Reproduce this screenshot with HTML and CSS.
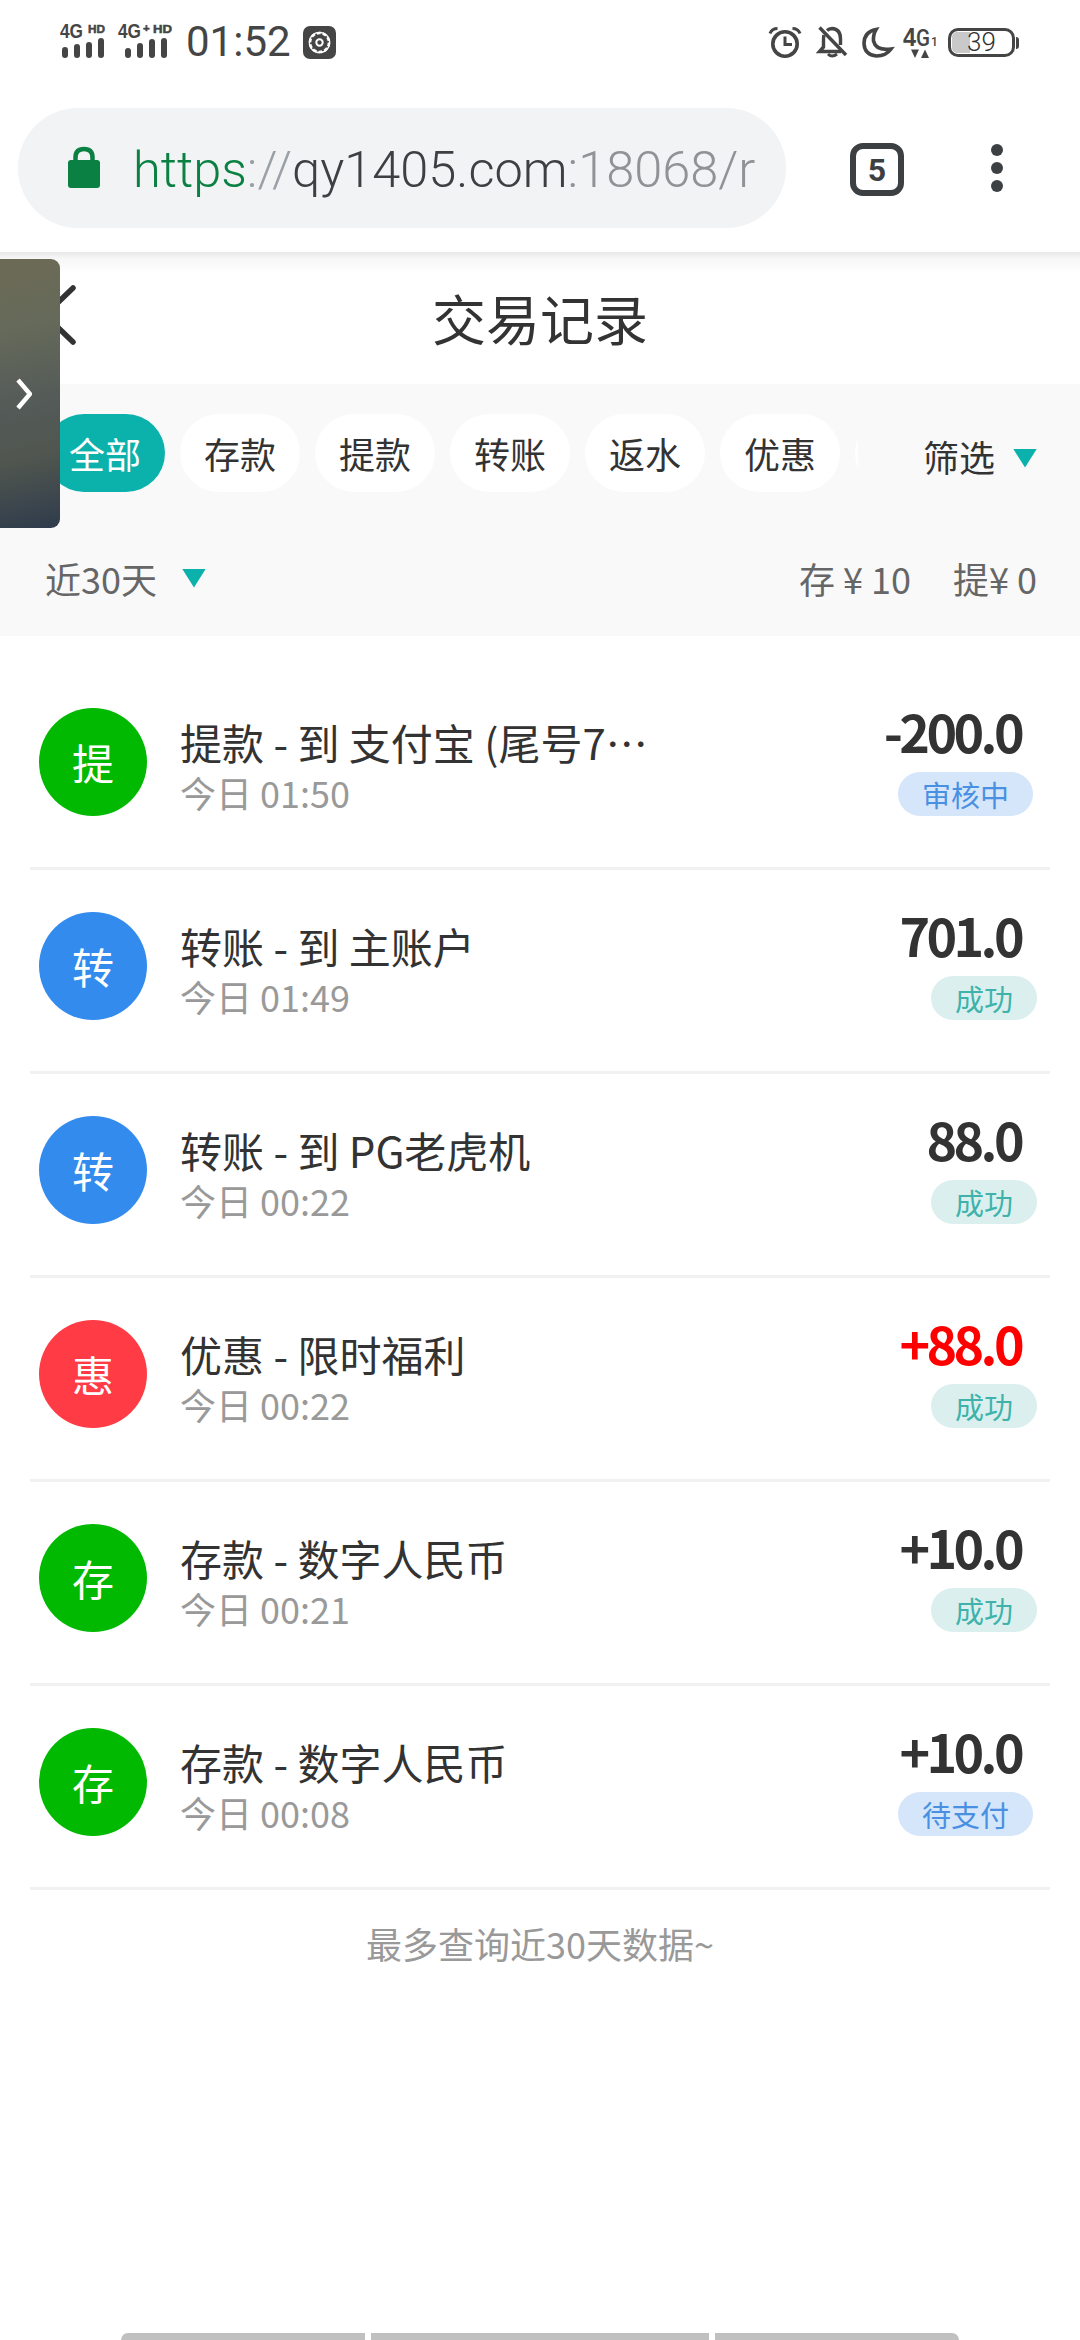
FILE: index.html
```html
<!DOCTYPE html>
<html lang="zh-CN">
<head>
<meta charset="utf-8">
<title>交易记录</title>
<link rel="stylesheet" href="styles.css">
</head>
<body>
<div class="status">
  <div class="status-group">
    <svg class="sig-a" viewBox="0 0 50 40">
      <text class="net" x="0" y="17" textLength="23" lengthAdjust="spacingAndGlyphs">4G</text><text class="hd" x="28" y="12" textLength="17" lengthAdjust="spacingAndGlyphs">HD</text>
      <rect x="2" y="26" width="6" height="11" rx="3"/><rect x="14" y="23" width="6" height="14" rx="3"/><rect x="26" y="21" width="6" height="16" rx="3"/><rect x="38" y="17" width="6" height="20" rx="3"/>
    </svg>
    <svg class="sig-b" viewBox="0 0 56 40">
      <text class="net" x="0" y="17" textLength="23" lengthAdjust="spacingAndGlyphs">4G</text><text class="hd" x="25" y="11">+</text><text class="hd" x="35" y="12" textLength="19" lengthAdjust="spacingAndGlyphs">HD</text>
      <rect x="7" y="27" width="6" height="10" rx="3"/><rect x="19" y="22" width="6" height="15" rx="3"/><rect x="31" y="18" width="6" height="19" rx="3"/><rect x="43" y="17" width="6" height="20" rx="3"/>
    </svg>
    <span class="clock">01:52</span>
    <svg class="gear" viewBox="0 0 33 33">
      <rect width="33" height="33" rx="7" fill="#454545"/>
      <circle cx="16.5" cy="16.5" r="9.5" fill="none" stroke="#fff" stroke-width="2.6" stroke-dasharray="4 1.96"/>
      <circle cx="16.5" cy="16.5" r="10.2" fill="none" stroke="#fff" stroke-width="1.2"/>
      <circle cx="16.5" cy="16.5" r="3.2" fill="none" stroke="#fff" stroke-width="2"/>
    </svg>
  </div>
  <div class="status-group status-right">
    <svg class="ico-alarm" viewBox="0 0 34 32" fill="none" stroke="#454545" stroke-width="3.6">
      <circle cx="17" cy="18" r="12.2"/>
      <path d="M17 10.5V18.5H24" stroke-width="3"/>
      <path d="M2 7.500Q4 2.500 9.500 2.500M32 7.500Q30 2.500 24.500 2.500" stroke-width="3"/>
    </svg>
    <svg class="ico-bell" viewBox="0 0 31 32" fill="none" stroke="#454545" stroke-width="3.4">
      <path d="M7 9Q6.500 11 6.500 14V21L2.500 25.500H24"/>
      <path d="M10 4.500Q12 2.500 15 2.500Q23.500 3 23.500 13V19"/>
      <path d="M11 28Q15 32 20 28" stroke-width="3"/>
      <path d="M2.500 1.500L29 29"/>
    </svg>
    <svg class="ico-moon" viewBox="0 0 31 31" fill="none" stroke="#454545" stroke-width="3.6">
      <path d="M14 2.500Q2 5 2 16.500Q2.500 28 14.500 29Q24 29 29 22Q14 24 11.500 14Q11 7.500 14 2.500Z"/>
    </svg>
    <svg class="ico-net" viewBox="0 0 34 32">
      <text class="net-small" x="0" y="20" textLength="13" lengthAdjust="spacingAndGlyphs">4</text><text class="net-g" x="13" y="20" textLength="14" lengthAdjust="spacingAndGlyphs">G</text><text class="net-sub" x="28" y="20">1</text>
      <path d="M8 23.500H16L12 32ZM22 23.500L26 32H18Z"/>
    </svg>
    <div class="battery">
      <span class="battery-fill"></span>
      <span class="battery-num">39</span>
    </div>
  </div>
</div>

<div class="toolbar">
  <div class="omnibox">
    <svg class="lock" viewBox="0 0 32 42">
      <rect y="14" width="32" height="28" rx="3" fill="#0b8043"/>
      <path d="M7.500 17V11.500Q7.500 3 16 3Q24.500 3 24.500 11.500V17" fill="none" stroke="#0b8043" stroke-width="4.500"/>
    </svg>
    <div class="url"><span class="u-scheme">https</span><span class="u-sep">://</span><span class="u-host">qy1405.com</span><span class="u-rest">:18068/r</span></div>
  </div>
  <div class="tab-count">5</div>
  <div class="menu-dots"><i></i><i></i><i></i></div>
</div>

<header class="page-head">
  <svg class="back" viewBox="0 0 36 60" fill="none" stroke="#333" stroke-width="5.500" stroke-linecap="round"><path d="M32 3L4 30L32 57"/></svg>
  <h1 class="page-title">交易记录</h1>
</header>

<section class="filters">
  <div class="tab-row">
    <div class="chips">
      <span class="chip chip-on">全部</span>
      <span class="chip">存款</span>
      <span class="chip">提款</span>
      <span class="chip">转账</span>
      <span class="chip">返水</span>
      <span class="chip">优惠</span>
      <span class="chip"></span>
    </div>
    <div class="filter-btn">筛选<span class="tri"></span></div>
  </div>
  <div class="range-row">
    <div class="range">近30天<span class="tri"></span></div>
    <div class="totals"><span>存 ¥ 10</span><span>提¥ 0</span></div>
  </div>
</section>

<main class="list">
  <article class="row">
    <div class="avatar av-green">提</div>
    <div class="info"><div class="info-title">提款 - 到 支付宝 (尾号7…</div><div class="info-time">今日 01:50</div></div>
    <div class="side"><div class="amount">-200.0</div><div class="badge badge-blue">审核中</div></div>
  </article>
  <article class="row">
    <div class="avatar av-blue">转</div>
    <div class="info"><div class="info-title">转账 - 到 主账户</div><div class="info-time">今日 01:49</div></div>
    <div class="side"><div class="amount">701.0</div><div class="badge badge-teal">成功</div></div>
  </article>
  <article class="row">
    <div class="avatar av-blue">转</div>
    <div class="info"><div class="info-title">转账 - 到 PG老虎机</div><div class="info-time">今日 00:22</div></div>
    <div class="side"><div class="amount">88.0</div><div class="badge badge-teal">成功</div></div>
  </article>
  <article class="row">
    <div class="avatar av-red">惠</div>
    <div class="info"><div class="info-title">优惠 - 限时福利</div><div class="info-time">今日 00:22</div></div>
    <div class="side"><div class="amount amount-red">+88.0</div><div class="badge badge-teal">成功</div></div>
  </article>
  <article class="row">
    <div class="avatar av-green">存</div>
    <div class="info"><div class="info-title">存款 - 数字人民币</div><div class="info-time">今日 00:21</div></div>
    <div class="side"><div class="amount">+10.0</div><div class="badge badge-teal">成功</div></div>
  </article>
  <article class="row">
    <div class="avatar av-green">存</div>
    <div class="info"><div class="info-title">存款 - 数字人民币</div><div class="info-time">今日 00:08</div></div>
    <div class="side"><div class="amount">+10.0</div><div class="badge badge-blue">待支付</div></div>
  </article>
</main>
<p class="list-end">最多查询近30天数据~</p>

<div class="nav-bar"><span></span><span></span><span></span></div>

<!-- floating side drawer handle -->
<div class="drawer">
  <svg class="drawer-arrow" viewBox="0 0 16 32" fill="none" stroke="#fff" stroke-width="4.500"><path d="M2 2L14 16L2 30"/></svg>
</div>
</body>
</html>
```
FILE: styles.css
```css
* { box-sizing: border-box; }
html, body { margin: 0; padding: 0; }
body {
  position: relative;
  width: 1080px;
  height: 2340px;
  overflow: hidden;
  display: flex;
  flex-direction: column;
  background: #fff;
  color: #333;
  font-family: "Noto Sans CJK SC", "Noto Sans", sans-serif;
}

/* status bar */
.status {
  height: 84px;
  flex: none;
  padding: 0 60px;
  display: flex;
  align-items: center;
  justify-content: space-between;
}
.status-group { display: flex; align-items: center; }
.status svg { display: block; flex: none; fill: #454545; overflow: visible; }
.sig-a { width: 50px; height: 40px; margin-top: -2px; }
.sig-b { width: 56px; height: 40px; margin: -2px 0 0 8px; }
.net { font: bold 20px "Liberation Sans", sans-serif; }
.hd { font: bold 11.500px "Liberation Sans", sans-serif; stroke: #454545; stroke-width: .5px; }
.clock {
  margin-left: 12px;
  font: 400 42px/1 Roboto, sans-serif;
  color: #454545;
}
.gear { width: 33px; height: 33px; margin-left: 12px; }
.status-right svg { fill: none; }
.ico-alarm { width: 34px; height: 32px; }
.ico-bell { width: 31px; height: 32px; margin-left: 15px; }
.ico-moon { width: 31px; height: 31px; margin-left: 14px; }
.status-right .ico-net { width: 34px; height: 32px; margin-left: 10px; fill: #454545; }
.net-small { font: bold 26px "Liberation Sans", sans-serif; }
.net-g { font: 500 24px Roboto, sans-serif; }
.net-sub { font: 500 12px Roboto, sans-serif; }
.battery {
  position: relative;
  width: 67px;
  height: 29px;
  margin: 0 5px 0 11px;
  border: 3px solid #454545;
  border-radius: 10px;
  display: flex;
  align-items: center;
  justify-content: center;
}
.battery::after {
  content: "";
  position: absolute;
  right: -7px;
  top: 6px;
  width: 3px;
  height: 12px;
  border-radius: 0 3px 3px 0;
  background: #454545;
}
.battery-fill {
  position: absolute;
  left: 1px;
  top: 1px;
  bottom: 1px;
  width: 18px;
  border-radius: 5px 0 0 5px;
  background: #c9c9c9;
}
.battery-num {
  position: relative;
  font: 300 26px/1 Roboto, sans-serif;
  color: #333;
}

/* browser toolbar */
.toolbar {
  height: 168px;
  flex: none;
  display: flex;
  align-items: flex-start;
  padding: 24px 0 0 18px;
}
.omnibox {
  width: 768px;
  height: 120px;
  flex: none;
  border-radius: 60px;
  background: #f1f3f4;
  display: flex;
  align-items: center;
  padding-left: 50px;
  overflow: hidden;
}
.lock { width: 32px; height: 42px; flex: none; margin-top: -3px; }
.url {
  width: 630px;
  margin: 4px 0 0 33px;
  overflow: hidden;
  white-space: nowrap;
  font: 300 50.500px/64px Roboto, sans-serif;
}
.u-scheme { color: #0b8043; }
.u-sep { color: #9aa0a6; }
.u-host { color: #3c4043; }
.u-rest { color: #8f9396; }
.tab-count {
  width: 54px;
  height: 53px;
  margin: 35px 0 0 64px;
  border: 6px solid #3c4043;
  border-radius: 13px;
  display: flex;
  align-items: center;
  justify-content: center;
  font: bold 32px/1 "Liberation Sans Narrow", Roboto, sans-serif;
  color: #3c4043;
}
.menu-dots {
  margin: 36px 0 0 87px;
  display: flex;
  flex-direction: column;
  gap: 6px;
}
.menu-dots i {
  display: block;
  width: 12px;
  height: 12px;
  border-radius: 50%;
  background: #3c4043;
}

/* page header */
.page-head {
  height: 132px;
  flex: none;
  display: flex;
  align-items: center;
  justify-content: center;
  position: relative;
  background: linear-gradient(#e8e8e8 0, #f6f6f6 6px, #fff 22px);
}
.back {
  position: absolute;
  left: 41px;
  top: 33px;
  width: 36px;
  height: 60px;
}
.page-title {
  margin: 0;
  font-size: 54px;
  font-weight: 400;
  line-height: 1;
  color: #333;
}

/* filters */
.filters {
  height: 252px;
  flex: none;
  background: #f9f9f9;
}
.tab-row {
  display: flex;
  padding-top: 30px;
}
.chips {
  width: 858px;
  flex: none;
  display: flex;
  gap: 15px;
  padding-left: 45px;
  overflow: hidden;
}
.chip {
  flex: none;
  width: 120px;
  height: 78px;
  border-radius: 39px;
  background: #fff;
  font-size: 36px;
  line-height: 78px;
  text-align: center;
  color: #333;
}
.chip-on { background: #0bb2ac; color: #fff; }
.filter-btn {
  display: flex;
  align-items: center;
  padding: 6px 0 0 65px;
  height: 78px;
  font-size: 36px;
  line-height: 1;
  color: #333;
}
.filter-btn .tri { margin-top: 4px; }
.tri {
  display: block;
  width: 24px;
  height: 19px;
  margin-left: 18px;
  background: #0bb2ac;
  clip-path: polygon(0 0, 100% 0, 50% 100%);
}
.range-row {
  display: flex;
  justify-content: space-between;
  align-items: center;
  padding: 61px 43px 0 45px;
  font-size: 36px;
  line-height: 50px;
  color: #666;
}
.range { display: flex; align-items: center; }
.range .tri { margin-left: 25px; }
.totals { display: flex; gap: 42px; }

/* transaction list */
.list { padding: 30px 30px 0; flex: none; }
.row {
  height: 204px;
  padding: 37px 13px 0 9px;
  display: flex;
  align-items: flex-start;
  border-bottom: 3px solid #f1f1f1;
}
.avatar {
  width: 108px;
  height: 108px;
  margin-top: 5px;
  flex: none;
  border-radius: 50%;
  color: #fff;
  font-size: 42px;
  line-height: 108px;
  text-align: center;
}
.av-green { background: #00b900; }
.av-blue { background: #348bee; }
.av-red { background: #ff3b45; }
.info { margin: 14px 0 0 33px; }
.info-title { font-size: 42px; line-height: 50px; color: #333; white-space: nowrap; }
.info-time { font-size: 36px; line-height: 50px; color: #999; white-space: nowrap; }
.side {
  margin: -2px 0 0 auto;
  display: flex;
  flex-direction: column;
  align-items: flex-end;
}
.amount {
  margin-right: 16px;
  font-size: 52px;
  font-weight: 700;
  line-height: 60px;
  letter-spacing: -3.600px;
  color: #333;
}
.amount-red { color: #f00; }
.badge {
  height: 44px;
  margin-top: 11px;
  padding: 0 24px;
  border-radius: 22px;
  font-size: 29px;
  line-height: 44px;
}
.badge-teal { background: #dbf0ee; color: #3fb3ab; }
.badge-blue { background: #d5e6fa; color: #4a90e2; margin-right: 4px; }
.list-end {
  margin: 28px 0 0;
  font-size: 36px;
  line-height: 50px;
  text-align: center;
  color: #999;
}

/* gesture strip at the bottom edge */
.nav-bar {
  margin-top: auto;
  flex: none;
  height: 7px;
  padding: 0 121px;
  display: flex;
  gap: 6px;
}
.nav-bar span { background: #c0c0c0; flex: 244; }
.nav-bar span:nth-child(2) { flex: 338; }
.nav-bar span:first-child { border-radius: 7px 0 0 0; }
.nav-bar span:last-child { border-radius: 0 7px 0 0; }

/* side drawer handle */
.drawer {
  position: absolute;
  left: 0;
  top: 259px;
  width: 60px;
  height: 269px;
  border-radius: 0 9px 9px 0;
  background: linear-gradient(168deg, #6c6a55 0%, #666a5a 25%, #535a58 55%, #51574f 72%, #2f3b4c 100%);
}
.drawer-arrow {
  position: absolute;
  left: 16px;
  top: 119px;
  width: 16px;
  height: 32px;
}
```
